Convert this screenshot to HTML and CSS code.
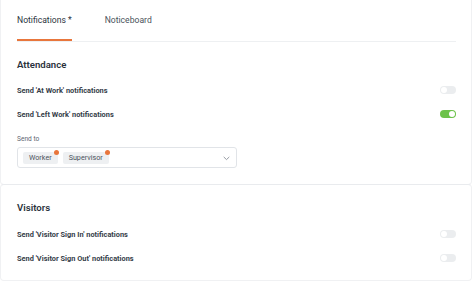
FILE: index.html
```html
<!DOCTYPE html>
<html>
<head>
<meta charset="utf-8">
<link rel="stylesheet" href="styles.css">
</head>
<body>
<div class="page">
  <div class="card card-top">
    <div class="tabs">
      <div class="tab active">Notifications *</div>
      <div class="tab">Noticeboard</div>
    </div>
    <div class="section">
      <h2 class="title">Attendance</h2>
      <div class="row">
        <span class="label">Send 'At Work' notifications</span>
        <span class="toggle"></span>
      </div>
      <div class="row">
        <span class="label">Send 'Left Work' notifications</span>
        <span class="toggle on"></span>
      </div>
      <div class="field">
        <div class="field-label">Send to</div>
        <div class="select">
          <span class="tag">Worker<span class="x"></span></span>
          <span class="tag">Supervisor<span class="x"></span></span>
          <svg class="chev" width="7" height="5" viewBox="0 0 7 5"><path d="M0.7 0.9l2.8 2.7 2.8-2.7" fill="none" stroke="#8a9099" stroke-width="0.9"/></svg>
        </div>
      </div>
    </div>
  </div>
  <div class="card card-bottom">
    <div class="section">
      <h2 class="title">Visitors</h2>
      <div class="row">
        <span class="label">Send 'Visitor Sign In' notifications</span>
        <span class="toggle"></span>
      </div>
      <div class="row">
        <span class="label">Send 'Visitor Sign Out' notifications</span>
        <span class="toggle"></span>
      </div>
    </div>
  </div>
</div>
</body>
</html>
```
FILE: styles.css
```css
* { box-sizing: border-box; }
html, body { margin: 0; padding: 0; background: #ffffff; }
body {
  font-family: Roboto, "Liberation Sans", Arial, sans-serif;
  color: #2f3844;
  width: 474px;
  height: 282px;
  overflow: hidden;
}
.page {
  width: 472px;
  margin-top: -4px;
}
.card {
  background: #fff;
  border: 1px solid #f0f1f3;
  border-radius: 4px;
}
.card-top {
  padding: 0 15px 0 16px;
  height: 189px;
  border-bottom-color: #e9ebee;
}
.card-bottom {
  margin-top: -1px;
  padding: 0 15px 0 16px;
  height: 97px;
  border-top-color: #e9ebee;
}
.tabs {
  display: flex;
  gap: 33px;
  border-bottom: 1px solid #eef0f2;
  height: 45px;
  padding-top: 4px;
}
.tab {
  font-size: 8.6px;
  line-height: 11px;
  color: #4a525c;
  padding-top: 14px;
  height: 40px;
  border-bottom: 2px solid transparent;
}
.tab.active {
  border-bottom-color: #e8763c;
  color: #2b333d;
}
.title {
  margin: 0;
  font-size: 9.6px;
  line-height: 11px;
  font-weight: 600;
  color: #2a323c;
  padding-top: 17px;
  height: 36px;
}
.row {
  display: flex;
  justify-content: space-between;
  align-items: center;
  height: 24px;
}
.label {
  font-size: 7.4px;
  line-height: 9px;
  font-weight: 700;
  color: #363e49;
}
.toggle {
  width: 16px;
  height: 8px;
  border-radius: 4px;
  background: #ebedef;
  position: relative;
}
.toggle::after {
  content: "";
  position: absolute;
  top: 1px;
  left: 1px;
  width: 6px;
  height: 6px;
  border-radius: 50%;
  background: #fff;
}
.toggle.on { background: #6cc24a; }
.toggle.on::after { left: 9px; }
.field { padding-top: 8px; }
.field-label {
  font-size: 6.6px;
  line-height: 10px;
  color: #5d6570;
  height: 13px;
}
.select {
  width: 220px;
  height: 21px;
  border: 1px solid #e1e4e8;
  border-radius: 3px;
  display: flex;
  align-items: center;
  padding-left: 5px;
  gap: 5px;
  position: relative;
}
.tag {
  position: relative;
  background: #eef0f2;
  border-radius: 2px;
  font-size: 7.2px;
  color: #4a525c;
  padding: 0 6px;
  height: 12px;
  line-height: 12px;
}
.x {
  position: absolute;
  top: -2px;
  right: -1px;
  width: 5px;
  height: 5px;
  border-radius: 50%;
  background: #e8763c;
}
.chev {
  position: absolute;
  right: 6px;
  top: 8px;
}
.card-bottom .title { padding-top: 17px; height: 37px; }
```
